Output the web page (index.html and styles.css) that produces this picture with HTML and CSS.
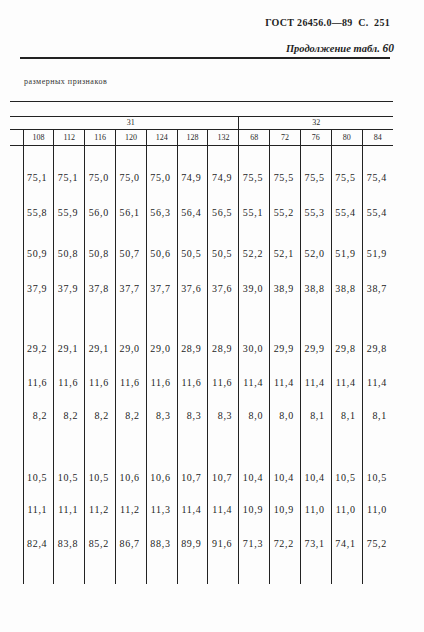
FILE: index.html
```html
<!DOCTYPE html>
<html lang="ru">
<head>
<meta charset="utf-8">
<title>ГОСТ 26456.0—89 С. 251</title>
<link rel="stylesheet" href="styles.css">
</head>
<body>
<div class="page">
  <div class="doc-head">ГОСТ 26456.0—89&nbsp; С.&nbsp; 251</div>
  <div class="doc-sub">Продолжение табл. <b>60</b></div>
  <div class="rule"></div>
  <div class="caption">размерных признаков</div>
  <table class="tbl">
    <colgroup><col class="c0"><col span="12" class="cn"></colgroup>
    <thead>
      <tr class="ra"><th colspan="13"></th></tr>
      <tr class="rb"><th class="blank"></th><th colspan="7" class="grp">31</th><th colspan="5">32</th></tr>
      <tr class="rc"><th class="blank"></th><th>108</th><th>112</th><th>116</th><th>120</th><th>124</th><th>128</th><th>132</th><th>68</th><th>72</th><th>76</th><th>80</th><th>84</th></tr>
    </thead>
    <tbody>
      <tr class="p1"><td></td><td>75,1</td><td>75,1</td><td>75,0</td><td>75,0</td><td>75,0</td><td>74,9</td><td>74,9</td><td>75,5</td><td>75,5</td><td>75,5</td><td>75,5</td><td>75,4</td></tr>
      <tr class="p2"><td></td><td>55,8</td><td>55,9</td><td>56,0</td><td>56,1</td><td>56,3</td><td>56,4</td><td>56,5</td><td>55,1</td><td>55,2</td><td>55,3</td><td>55,4</td><td>55,4</td></tr>
      <tr class="p3"><td></td><td>50,9</td><td>50,8</td><td>50,8</td><td>50,7</td><td>50,6</td><td>50,5</td><td>50,5</td><td>52,2</td><td>52,1</td><td>52,0</td><td>51,9</td><td>51,9</td></tr>
      <tr class="p4"><td></td><td>37,9</td><td>37,9</td><td>37,8</td><td>37,7</td><td>37,7</td><td>37,6</td><td>37,6</td><td>39,0</td><td>38,9</td><td>38,8</td><td>38,8</td><td>38,7</td></tr>
      <tr class="p5"><td></td><td>29,2</td><td>29,1</td><td>29,1</td><td>29,0</td><td>29,0</td><td>28,9</td><td>28,9</td><td>30,0</td><td>29,9</td><td>29,9</td><td>29,8</td><td>29,8</td></tr>
      <tr class="p6"><td></td><td>11,6</td><td>11,6</td><td>11,6</td><td>11,6</td><td>11,6</td><td>11,6</td><td>11,6</td><td>11,4</td><td>11,4</td><td>11,4</td><td>11,4</td><td>11,4</td></tr>
      <tr class="p7"><td></td><td>8,2</td><td>8,2</td><td>8,2</td><td>8,2</td><td>8,3</td><td>8,3</td><td>8,3</td><td>8,0</td><td>8,0</td><td>8,1</td><td>8,1</td><td>8,1</td></tr>
      <tr class="p8"><td></td><td>10,5</td><td>10,5</td><td>10,5</td><td>10,6</td><td>10,6</td><td>10,7</td><td>10,7</td><td>10,4</td><td>10,4</td><td>10,4</td><td>10,5</td><td>10,5</td></tr>
      <tr class="p9"><td></td><td>11,1</td><td>11,1</td><td>11,2</td><td>11,2</td><td>11,3</td><td>11,4</td><td>11,4</td><td>10,9</td><td>10,9</td><td>11,0</td><td>11,0</td><td>11,0</td></tr>
      <tr class="p10"><td></td><td>82,4</td><td>83,8</td><td>85,2</td><td>86,7</td><td>88,3</td><td>89,9</td><td>91,6</td><td>71,3</td><td>72,2</td><td>73,1</td><td>74,1</td><td>75,2</td></tr>
      <tr class="pend"><td></td><td></td><td></td><td></td><td></td><td></td><td></td><td></td><td></td><td></td><td></td><td></td><td></td></tr>
    </tbody>
  </table>
</div>
</body>
</html>
```

FILE: styles.css
```css
html, body {
  margin: 0;
  padding: 0;
  background: #fdfdfd;
}
body {
  font-family: "Liberation Serif", "DejaVu Serif", serif;
  color: #1e1e1e;
}
.page {
  width: 424px;
  height: 632px;
  overflow: hidden;
  padding-top: 17px;
  box-sizing: border-box;
}
.doc-head {
  font-weight: bold;
  font-size: 10px;
  line-height: 12px;
  text-align: right;
  padding-right: 34px;
  letter-spacing: 0.3px;
}
.doc-sub {
  margin-top: 13px;
  font-style: italic;
  font-weight: bold;
  font-size: 10.5px;
  line-height: 12px;
  text-align: right;
  padding-right: 30px;
}
.doc-sub b {
  font-size: 11.5px;
}
.rule {
  margin: 2px 34px 0 20px;
  height: 2px;
  background: #222;
}
.caption {
  margin: 18px 0 0 24px;
  font-family: "Liberation Serif", "DejaVu Serif", serif;
  font-size: 8px;
  line-height: 10px;
  letter-spacing: 0.5px;
  color: #333;
}
.tbl {
  margin: 14px 0 0 10px;
  width: 383px;
  table-layout: fixed;
  border-collapse: collapse;
  font-family: "Liberation Serif", "DejaVu Serif", serif;
}
.c0 { width: 13px; }
.tbl th, .tbl td {
  padding: 0;
  font-weight: normal;
  font-family: "Liberation Serif", "DejaVu Serif", serif;
}
.tbl thead th {
  font-size: 8px;
  text-align: center;
  color: #2a2a2a;
}
.ra th {
  height: 14px;
  border-top: 1px solid #222;
}
.rb th {
  height: 12px;
  line-height: 12px;
  border-top: 1px solid #222;
}
.rb .grp {
  border-right: 1px solid #222;
}
.rc th {
  height: 15px;
  line-height: 15px;
  border-top: 1px solid #222;
  border-bottom: 1px solid #222;
  border-left: 1px solid #222;
}
.rc th.blank {
  border-left: none;
}
.tbl tbody td {
  vertical-align: top;
  text-align: right;
  padding-right: 6px;
  font-size: 10px;
  line-height: 12px;
  letter-spacing: 0.7px;
  border-left: 1px solid #222;
  color: #1e1e1e;
}
.tbl tbody td:first-child {
  border-left: none;
}
.p1 td { padding-top: 26px; }
.p2 td { padding-top: 23px; }
.p3 td { padding-top: 29px; }
.p4 td { padding-top: 23px; }
.p5 td { padding-top: 48px; }
.p6 td { padding-top: 22px; }
.p7 td { padding-top: 21px; }
.p8 td { padding-top: 50px; }
.p9 td { padding-top: 20px; }
.p10 td { padding-top: 22px; }
.pend td { height: 34px; }
```
